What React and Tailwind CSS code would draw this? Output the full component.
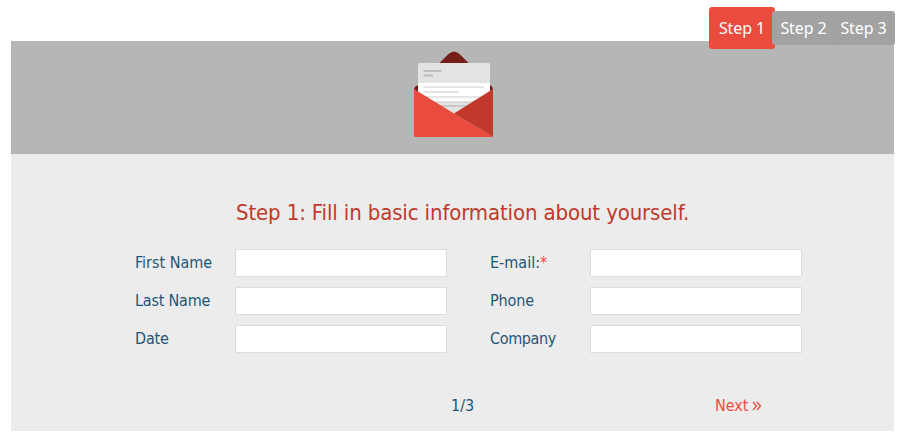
const TAHOMA = "font-['DejaVu_Sans_Condensed','DejaVu_Sans',sans-serif] [font-stretch:condensed]";

function Envelope() {
  return (
    <svg width="80" height="86" viewBox="0 0 80 86" aria-hidden="true">
      <path d="M0 39Q0 36 3 34.500H77Q79 36 79 39V50H0Z" fill="#751e18" />
      <path d="M25 12.500L34.500 3Q37.500 .5 40 .5Q42.500 .5 45.500 3L55 12.500Z" fill="#751e18" />
      <path d="M4 14Q4 12 6 12H74Q76 12 76 14V60H4Z" fill="#e3e3e3" />
      <path d="M4 32H76V50L40 62L4 50Z" fill="#fff" />
      <path d="M10 50H70V64H10Z" fill="#e3e3e3" />
      <path d="M9.500 20H27.500M9.500 24.500H19" stroke="#bdbdbd" strokeWidth="2" />
      <path d="M9.500 36H70M9.500 41H45M9.500 46H70" stroke="#e5e5e5" strokeWidth="2" />
      <path d="M20 51.500H60" stroke="#d4d4d4" strokeWidth="1" />
      <path d="M24 55H56" stroke="#c8c8c8" strokeWidth="2" />
      <path d="M0 38L40 62.500L79 85.500Q79 86 78 86H1Q0 86 0 85Z" fill="#e94c3d" />
      <path d="M79 38L40 62.500L79 85.500Z" fill="#c0392b" />
    </svg>
  );
}

function Field({ label, required, tracking = "" }) {
  return (
    <label className="flex h-7 items-center">
      <span className={`w-[100px] whitespace-nowrap text-base leading-6 text-[#1f5577] ${TAHOMA}`}>
        <span className={tracking}>{label}</span>
        {required && <span className="text-[#f44]">*</span>}
      </span>
      <input className="h-7 w-[212px] border border-[#dddddd] bg-white px-2 text-sm outline-none" />
    </label>
  );
}

export default function App() {
  return (
    <div className="h-[446px] w-[907px] bg-white pt-[41px] pl-[11px]">
      <main className="relative h-[390px] w-[883px] bg-[#ececec]">
        <nav className="absolute -top-[34px] left-[698px] flex items-center font-['Noto_Sans','Open_Sans',sans-serif] text-base text-white">
          <button className="h-[42px] w-[66px] rounded-[3px] bg-[#e94c3d] tracking-[-0.1px] whitespace-nowrap">Step 1</button>
          <div className="-ml-[3px] flex h-[34px] w-[123px] rounded-[3px] bg-[#a2a2a2]">
            <button className="w-[62px] pl-px tracking-[-0.1px] whitespace-nowrap">Step 2</button>
            <button className="w-[61px] border-l border-[#9e9e9e] pr-[3px] tracking-[-0.1px] whitespace-nowrap">Step 3</button>
          </div>
        </nav>
        <header className="flex h-[113px] bg-[#b6b6b6] pt-[10px] pl-[403px]">
          <Envelope />
        </header>
        <h1 className={`mt-[43px] ml-[225px] h-8 text-[22px] leading-8 tracking-[-0.13px] whitespace-nowrap text-[#c0392b] ${TAHOMA}`}>
          Step 1: Fill in basic information about yourself.
        </h1>
        <form className="mt-5 ml-[124px] flex gap-[43px]">
          <div className="flex flex-col gap-[10px]">
            <Field label="First Name" />
            <Field label="Last Name" tracking="tracking-[-0.2px]" />
            <Field label="Date" tracking="tracking-[-0.2px]" />
          </div>
          <div className="flex flex-col gap-[10px]">
            <Field label="E-mail:" required />
            <Field label="Phone" tracking="tracking-[-0.1px]" />
            <Field label="Company" tracking="tracking-[-0.35px]" />
          </div>
        </form>
        <footer className={`mt-[41px] ml-[440px] flex h-6 text-base leading-6 ${TAHOMA}`}>
          <span className="w-[264px] text-[#1f5577]">1/3</span>
          <a className="flex items-center whitespace-nowrap text-[#e94c3d]">
            Next
            <svg className="ml-[3px]" width="10" height="10" viewBox="0 0 10 10" fill="none" stroke="currentColor" strokeWidth="1.3">
              <path d="M1 1L4.500 5L1 9M5 1L8.500 5L5 9" />
            </svg>
          </a>
        </footer>
      </main>
    </div>
  );
}
